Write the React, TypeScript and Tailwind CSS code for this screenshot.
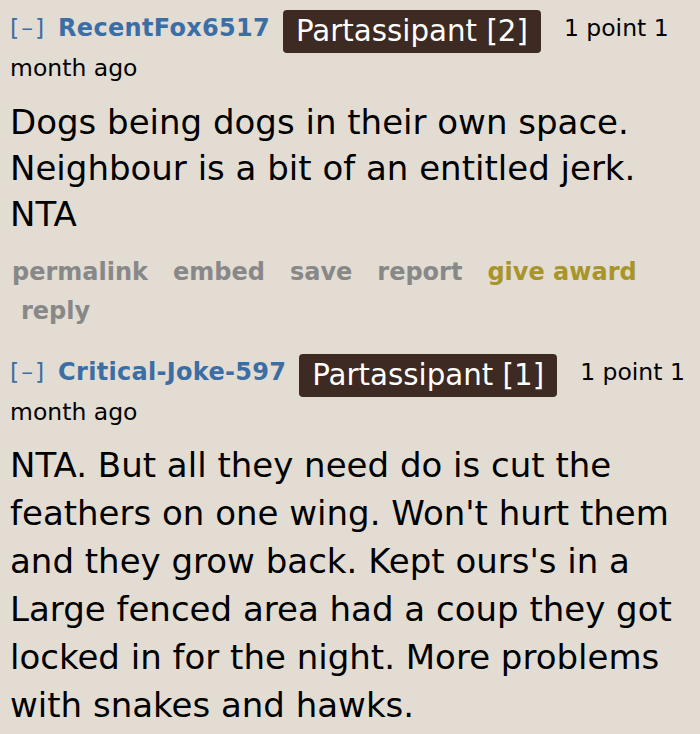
import React from "react";

function Header({ user, flair }: { user: string; flair: string }) {
  return (
    <div className="text-[23.5px] leading-[40px] text-black">
      <span className="mr-[12px] tracking-[2px] text-[#3b6ea5]">[–]</span>
      <span className="mr-[13px] text-[24px] font-bold tracking-[0.3px] text-[#3b6ea5]">{user}</span>
      <span className="inline-block h-[43px] -my-[6px] rounded-[4px] bg-[#3d2a22] px-[13px] align-[-5px] text-[29.3px] leading-[43px] text-white">
        {flair}
      </span>
      <span className="ml-[23px]">1 point 1 month ago</span>
    </div>
  );
}

function Actions() {
  return (
    <ul className="mt-[16px] flex flex-wrap gap-x-[25px] pl-[2px] text-[24px] font-bold leading-[39px] text-[#888888]">
      <li>permalink</li>
      <li>embed</li>
      <li>save</li>
      <li>report</li>
      <li className="text-[#a8952a]">give award</li>
      <li className="ml-[9px]">reply</li>
    </ul>
  );
}

export default function App() {
  return (
    <div className="min-h-[734px] w-[700px] overflow-hidden bg-[#e2dcd3] pl-[10px] pt-[8px] font-['DejaVu_Sans',Verdana,sans-serif]">
      <Header user="RecentFox6517" flair="Partassipant [2]" />
      <div className="mt-[11px] text-[34px] leading-[46px] text-black">
        Dogs being dogs in their own space.
        <br />
        Neighbour is a bit of an entitled jerk.
        <br />
        NTA
      </div>
      <Actions />
      <div className="mt-[21px]">
        <Header user="Critical-Joke-597" flair="Partassipant [1]" />
      </div>
      <div className="mt-[9px] text-[34px] leading-[48px] text-black">
        NTA. But all they need do is cut the
        <br />
        feathers on one wing. Won't hurt them
        <br />
        and they grow back. Kept ours's in a
        <br />
        Large fenced area had a coup they got
        <br />
        locked in for the night. More problems
        <br />
        with snakes and hawks.
      </div>
    </div>
  );
}
